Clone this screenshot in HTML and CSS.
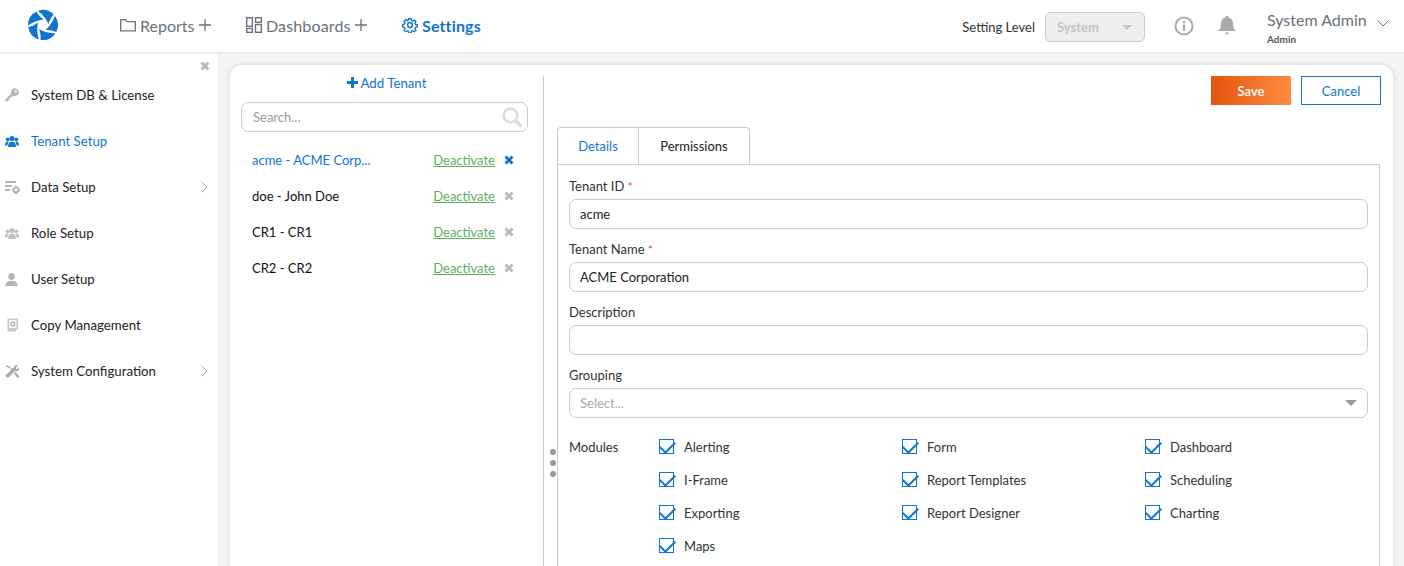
FILE: index.html
```html
<!DOCTYPE html>
<html lang="en">
<head>
    <meta charset="UTF-8">
    <title>Tenant Setup</title>
    <link rel="stylesheet" href="styles.css">
</head>
<body>

<header class="topbar">
    <svg class="logo" viewBox="0 0 32 32" width="32" height="32">
        <g fill="#0f75d1">
            <path id="blade" d="M10.900 1.900A15 15 0 0 1 26.800 5.600Q23.500 8.500 21.500 15Q18 7 10.900 1.900Z"/>
            <use href="#blade" transform="rotate(72 16 16)"/>
            <use href="#blade" transform="rotate(144 16 16)"/>
            <use href="#blade" transform="rotate(216 16 16)"/>
            <use href="#blade" transform="rotate(288 16 16)"/>
        </g>
    </svg>
    <nav class="mainnav">
        <a class="navitem navitem-reports">
            <svg viewBox="0 0 16 16" width="16" height="16" fill="none" stroke="#6b7178" stroke-width="1.300"><path d="M.7 13.800V2.700h5l1.500 2h8.100v9.100z"/></svg>
            <span>Reports</span>
            <svg class="plus" viewBox="0 0 12 12" width="12" height="12" stroke="#6b7178" stroke-width="1.300"><path d="M6 0v12M0 6h12"/></svg>
        </a>
        <a class="navitem navitem-dash">
            <svg viewBox="0 0 16 16" width="16" height="16" fill="none" stroke="#6b7178" stroke-width="1.400"><rect x=".7" y=".7" width="5.600" height="8.600"/><rect x="9.500" y=".7" width="5.800" height="4.600"/><rect x=".7" y="11.500" width="5.600" height="3.800"/><rect x="9.500" y="7.500" width="5.800" height="7.800"/></svg>
            <span>Dashboards</span>
            <svg class="plus" viewBox="0 0 12 12" width="12" height="12" stroke="#6b7178" stroke-width="1.300"><path d="M6 0v12M0 6h12"/></svg>
        </a>
        <a class="navitem active">
            <svg viewBox="0 0 16 16" width="16" height="16" fill="none" stroke="#0f75d1" stroke-width="1.500"><circle cx="8" cy="8" r="2.400"/><path d="M6.700 1h2.600l.4 2 1.300.6 1.800-1.100 1.800 1.800-1.100 1.800.6 1.300 2 .4v2.400l-2 .4-.6 1.300 1.100 1.800-1.800 1.800-1.800-1.100-1.300.6-.4 2H6.700l-.4-2-1.300-.6-1.800 1.100-1.800-1.800 1.100-1.800-.6-1.300-2-.4V7.400l2-.4.6-1.300-1.100-1.800 1.800-1.800 1.800 1.100 1.300-.6z" transform="translate(.8 .8) scale(.9)"/></svg>
            <span>Settings</span>
        </a>
    </nav>
    <div class="topright">
        <span class="level-label">Setting Level</span>
        <div class="level-select"><span>System</span><i class="caret"></i></div>
        <svg class="info" viewBox="0 0 20 20" width="20" height="20"><circle cx="10" cy="10" r="8.500" fill="none" stroke="#a9a9a9" stroke-width="2"/><rect x="8.800" y="8.500" width="2.400" height="6" fill="#a9a9a9"/><rect x="8.800" y="5" width="2.400" height="2.300" fill="#a9a9a9"/></svg>
        <svg class="bell" viewBox="0 0 18 20" width="18" height="20" fill="#a9a9a9"><path d="M9 0c1 0 1.500.7 1.500 1.500C13.500 2.200 15 4.500 15 7.500c0 4 1 5.500 3 7.500H0c2-2 3-3.500 3-7.500 0-3 1.500-5.300 4.500-6C7.500.7 8 0 9 0z"/><path d="M7 16.500h4c0 1-.9 2-2 2s-2-1-2-2z"/></svg>
        <div class="userbox">
            <div class="username">System Admin</div>
            <div class="userrole">Admin</div>
        </div>
        <svg class="userchev" viewBox="0 0 12 7" width="12" height="7" fill="none" stroke="#6b7178"><path d="M.5.5 6 6 11.500.5"/></svg>
    </div>
</header>

<div class="shell">
    <aside class="sidebar">
        <div class="side-close">
            <svg class="xmark" viewBox="0 0 10 10" width="10" height="10"><path d="M1.500 1.500l7 7M8.500 1.500l-7 7"/></svg>
        </div>
        <a class="sideitem">
            <svg class="sideicon" viewBox="0 0 14 14" width="14" height="14" fill="#b5b5b5"><path d="M10 .2a3.900 3.900 0 1 1-1.600 7.500L7 9.100H5.500v1.500H4v1.500L2.600 13.500H.5v-2.100l5.800-5.800A3.900 3.900 0 0 1 10 .2zm.8 1.800a1.200 1.200 0 1 0 0 2.400 1.200 1.200 0 0 0 0-2.400z"/></svg>
            <span>System DB &amp; License</span>
        </a>
        <a class="sideitem current">
            <svg class="sideicon" viewBox="0 0 14 11" width="14" height="11" fill="#0f75d1"><circle cx="7" cy="2.600" r="2.500"/><path d="M3 11c0-3.500 1.300-5.200 4-5.200s4 1.700 4 5.200z"/><circle cx="2.700" cy="3.300" r="1.900"/><circle cx="11.300" cy="3.300" r="1.900"/><path d="M0 9.500c0-2.500.8-4 2.500-4 .5 0 .9.100 1.200.4-.8 1-1.200 2.200-1.300 3.600zM14 9.500c0-2.500-.8-4-2.500-4-.5 0-.9.100-1.200.4.800 1 1.200 2.200 1.300 3.600z"/></svg>
            <span>Tenant Setup</span>
        </a>
        <a class="sideitem">
            <svg class="sideicon sideicon-wide" viewBox="0 0 15 13" width="15" height="13" fill="#b5b5b5"><rect width="11" height="2"/><rect y="4" width="7" height="2"/><rect y="8" width="5" height="2"/><circle cx="11" cy="8.800" r="2.500" fill="none" stroke="#b5b5b5" stroke-width="2"/><path d="M10 4.500h2v1.300h-2zM10 11.800h2V13h-2zM14 7.800h1v2h-1zM7 7.800h1v2H7z"/></svg>
            <span>Data Setup</span>
            <svg class="sidechev" viewBox="0 0 7 12" width="7" height="12" fill="none" stroke="#a9a9a9"><path d="M.5.500 6 6 .5 11.500"/></svg>
        </a>
        <a class="sideitem">
            <svg class="sideicon" viewBox="0 0 14 11" width="14" height="11" fill="#c0c0c0"><circle cx="7" cy="2.600" r="2.500"/><path d="M3 11c0-3.500 1.300-5.200 4-5.200s4 1.700 4 5.200z"/><circle cx="2.700" cy="3.300" r="1.900"/><circle cx="11.300" cy="3.300" r="1.900"/><path d="M0 9.500c0-2.500.8-4 2.500-4 .5 0 .9.100 1.200.4-.8 1-1.200 2.200-1.300 3.600zM14 9.500c0-2.500-.8-4-2.500-4-.5 0-.9.100-1.200.4.800 1 1.200 2.200 1.300 3.600z"/></svg>
            <span>Role Setup</span>
        </a>
        <a class="sideitem">
            <svg class="sideicon" viewBox="0 0 14 13" width="14" height="13" fill="#b5b5b5"><ellipse cx="6.500" cy="3.500" rx="3.200" ry="3.500"/><path d="M.2 13c0-3 1.500-4.300 4.300-5h4c2.800.7 4.300 2 4.300 5z"/></svg>
            <span>User Setup</span>
        </a>
        <a class="sideitem">
            <svg class="sideicon" viewBox="0 0 14 14" width="14" height="14"><path d="M2.500.5h10.500v11H11v2H2.500z" fill="#c8c8c8"/><rect x="4" y="2" width="7.500" height="8" fill="#f4f4f4"/><circle cx="7.700" cy="6" r="2" fill="none" stroke="#a9a9a9" stroke-width="1.200"/></svg>
            <span>Copy Management</span>
        </a>
        <a class="sideitem">
            <svg class="sideicon" viewBox="0 0 14 14" width="14" height="14" fill="#a9a9a9"><path d="M1 2.500 2.500 1l4 3.500 2-.5L10 1.500c1-.6 2.500-.4 3 0l-2 2 .2 1.400 1.300.2 1.300-2c.5 1 .3 2.500-.5 3.300-1 1-2.300 1-3.300.6L4 13c-.7.700-2 .7-2.700 0s-.7-1.800 0-2.500l5-4.800-1-1.200z"/><path d="m9 9 1.200-1 3.500 3.500c.4.500.4 1.300 0 1.800-.5.500-1.300.5-1.800 0z"/></svg>
            <span>System Configuration</span>
            <svg class="sidechev" viewBox="0 0 7 12" width="7" height="12" fill="none" stroke="#a9a9a9"><path d="M.5.500 6 6 .5 11.500"/></svg>
        </a>
    </aside>

    <main class="content">
        <div class="card">
            <section class="tenants">
                <a class="add-tenant"><svg viewBox="0 0 11 11" width="11" height="11" fill="#0f75d1"><path d="M4 0h3v4h4v3H7v4H4V7H0V4h4z"/></svg> Add Tenant</a>
                <div class="searchbox">
                    <span>Search...</span>
                    <svg viewBox="0 0 20 20" width="20" height="20" fill="none" stroke="#dcdcdc"><circle cx="8.500" cy="8.500" r="6.800" stroke-width="2.600"/><path d="m13.500 13.500 5 5" stroke-width="3.400" stroke-linecap="round"/></svg>
                </div>
                <ul class="tenant-list">
                    <li class="tenant selected"><span class="tenant-name">acme - ACME Corp...</span><a class="deact">Deactivate</a><svg class="xmark" viewBox="0 0 10 10" width="10" height="10"><path d="M1.500 1.500l7 7M8.500 1.500l-7 7"/></svg></li>
                    <li class="tenant"><span class="tenant-name">doe - John Doe</span><a class="deact">Deactivate</a><svg class="xmark" viewBox="0 0 10 10" width="10" height="10"><path d="M1.500 1.500l7 7M8.500 1.500l-7 7"/></svg></li>
                    <li class="tenant"><span class="tenant-name">CR1 - CR1</span><a class="deact">Deactivate</a><svg class="xmark" viewBox="0 0 10 10" width="10" height="10"><path d="M1.500 1.500l7 7M8.500 1.500l-7 7"/></svg></li>
                    <li class="tenant"><span class="tenant-name">CR2 - CR2</span><a class="deact">Deactivate</a><svg class="xmark" viewBox="0 0 10 10" width="10" height="10"><path d="M1.500 1.500l7 7M8.500 1.500l-7 7"/></svg></li>
                </ul>
            </section>

            <div class="splitter">
                <div class="dots"><i></i><i></i><i></i></div>
            </div>

            <section class="detail">
                <div class="actions">
                    <button class="btn-save">Save</button>
                    <button class="btn-cancel">Cancel</button>
                </div>
                <div class="tabs">
                    <a class="tab tab-on">Details</a>
                    <a class="tab">Permissions</a>
                </div>
                <div class="panel">
                    <label class="flabel">Tenant ID <em>*</em></label>
                    <div class="finput">acme</div>
                    <label class="flabel">Tenant Name <em>*</em></label>
                    <div class="finput">ACME Corporation</div>
                    <label class="flabel">Description</label>
                    <div class="finput"></div>
                    <label class="flabel">Grouping</label>
                    <div class="finput fselect"><span>Select...</span><i class="caret"></i></div>
                    <div class="modules">
                        <div class="modules-label">Modules</div>
                        <div class="modules-grid">
                            <label class="mod"><i class="cb"></i>Alerting</label>
                            <label class="mod"><i class="cb"></i>Form</label>
                            <label class="mod"><i class="cb"></i>Dashboard</label>
                            <label class="mod"><i class="cb"></i>I-Frame</label>
                            <label class="mod"><i class="cb"></i>Report Templates</label>
                            <label class="mod"><i class="cb"></i>Scheduling</label>
                            <label class="mod"><i class="cb"></i>Exporting</label>
                            <label class="mod"><i class="cb"></i>Report Designer</label>
                            <label class="mod"><i class="cb"></i>Charting</label>
                            <label class="mod"><i class="cb"></i>Maps</label>
                        </div>
                    </div>
                </div>
            </section>
        </div>
    </main>
</div>

</body>
</html>
```

FILE: styles.css
```css
* {
    box-sizing: border-box;
}

html, body {
    height: 566px;
    margin: 0;
    overflow: hidden;
}

body {
    font-family: 'Lato', 'Liberation Sans', sans-serif;
    font-size: 13px;
    color: #222;
    background-color: #fff;
}

/* top bar */
.topbar {
    display: flex;
    align-items: center;
    height: 54px;
    padding-left: 27px;
    border-bottom: 2px solid #ececec;
}

.logo {
    flex: none;
    margin-top: -2px;
}

.mainnav {
    display: flex;
    margin-left: 61px;
    margin-top: -2px;
    font-size: 16px;
    color: #6b7178;
}

.navitem {
    display: flex;
    align-items: center;
    gap: 4px;
}

.navitem-reports {
    width: 126px;
}

.navitem-dash {
    width: 156px;
    letter-spacing: 0.15px;
}

.plus {
    margin-left: 1px;
}

.navitem-dash .plus {
    margin-left: 0;
}

.active {
    color: #0f75d1;
    font-weight: 700;
    letter-spacing: 0.15px;
}

.topright {
    display: flex;
    align-items: center;
    margin-left: auto;
    padding-right: 15px;
}

.level-label {
    margin-top: 1px;
    color: #333;
}

.level-select {
    display: flex;
    align-items: center;
    justify-content: space-between;
    width: 100px;
    height: 30px;
    margin-left: 10px;
    margin-top: 2px;
    padding: 0 12px 0 11px;
    border: 1px solid #ccc;
    border-radius: 5px;
    background-color: #eee;
    color: #c4c4c4;
    font-weight: 700;
}

.caret {
    width: 0;
    height: 0;
    border-left: 5px solid transparent;
    border-right: 5px solid transparent;
    border-top: 5px solid #c4c4c4;
}

.info {
    margin-left: 29px;
}

.bell {
    margin-left: 24px;
}

.userbox {
    width: 110px;
    margin-left: 31px;
}

.username {
    margin-top: 2px;
    font-size: 16px;
    color: #6b7178;
}

.userrole {
    margin-top: 4px;
    font-size: 10px;
    font-weight: 700;
    color: #555;
}

.userchev {
    margin-top: -6px;
}

/* sidebar */
.shell {
    display: flex;
    height: 512px;
    background-color: #f3f3f3;
}

.sidebar {
    flex: none;
    width: 219px;
    padding-top: 7px;
    font-size: 13.250px;
    background-color: #fff;
    border-right: 1px solid #e8e8e8;
}

.side-close {
    display: flex;
    justify-content: flex-end;
    height: 11px;
    padding-right: 8px;
}

.xmark {
    flex: none;
    fill: none;
    stroke: #bbb;
    stroke-width: 3;
}

.sideitem {
    display: flex;
    align-items: center;
    height: 46px;
    padding-right: 10px;
    color: #222;
}

.sideitem span {
    flex: 1;
}

.sideicon {
    flex: none;
    margin-left: 5px;
    margin-right: 12px;
}

.sideicon-wide {
    margin-right: 11px;
}

.current {
    color: #0f75d1;
}

.sidechev {
    flex: none;
}

/* main card */
.content {
    flex: 1;
    min-width: 0;
    padding: 11px 11px 0 11px;
    overflow: hidden;
}

.card {
    display: flex;
    height: 600px;
    background-color: #fff;
    border-radius: 12px;
    box-shadow: 0 0 5px rgba(0, 0, 0, 0.12);
}

.tenants {
    flex: none;
    width: 313px;
    padding: 10px 15px 0 11px;
}

.add-tenant {
    display: block;
    height: 27px;
    padding-left: 4px;
    text-align: center;
    font-size: 13.250px;
    color: #0f75d1;
}

.searchbox {
    display: flex;
    align-items: center;
    justify-content: space-between;
    height: 30px;
    padding: 0 5px 0 11px;
    border: 1px solid #ccc;
    border-radius: 7px;
    color: #999;
}

.tenant-list {
    margin: 10px 0 0;
    padding: 0;
    list-style: none;
}

.tenant {
    display: flex;
    align-items: center;
    height: 36px;
    padding-left: 11px;
    color: #111;
}

.tenant-name {
    flex: 1;
}

.selected {
    color: #0f75d1;
}

.deact {
    color: #5cb05c;
    text-decoration: underline;
}

.tenant .xmark {
    margin: 0 14px 0 9px;
}

.selected .xmark {
    stroke: #0f75d1;
}

.splitter {
    flex: none;
    position: relative;
    width: 1px;
    margin-top: 11px;
    background-color: #ccc;
}

.dots {
    position: absolute;
    left: 7px;
    top: 373px;
}

.dots i {
    display: block;
    width: 6px;
    height: 6px;
    margin-bottom: 5px;
    border-radius: 50%;
    background-color: #999;
}

.detail {
    flex: 1;
    min-width: 0;
    padding: 11px 13px 0 13px;
}

.actions {
    display: flex;
    justify-content: flex-end;
    gap: 10px;
    height: 51px;
    margin-right: -1px;
}

.actions button {
    width: 80px;
    height: 29px;
    font-family: inherit;
    font-size: 13px;
}

.btn-save {
    border: 0;
    color: #fff;
    font-weight: 600;
    background: linear-gradient(to right, #e5540e, #fc8d40);
}

.btn-cancel {
    border: 1px solid #0f75d1;
    color: #0f75d1;
    background-color: #fff;
}

.tabs {
    display: flex;
    height: 37px;
}

.tab {
    display: flex;
    align-items: center;
    justify-content: center;
    width: 82px;
    border: 1px solid #ccc;
    border-bottom: 0;
    border-radius: 4px 0 0 0;
}

.tab + .tab {
    width: 111px;
    border-left: 0;
    border-radius: 0 4px 0 0;
}

.tab-on {
    color: #0f75d1;
}

.panel {
    height: 500px;
    padding: 12px 11px 0 11px;
    border: 1px solid #ccc;
}

.flabel {
    display: block;
    height: 22px;
    line-height: 18px;
    color: #333;
}

.flabel em {
    color: #e33;
    font-style: normal;
    font-size: 11px;
}

.finput {
    display: flex;
    align-items: center;
    height: 30px;
    margin-bottom: 11px;
    padding: 0 10px;
    border: 1px solid #ccc;
    border-radius: 7px;
    color: #222;
}

.fselect {
    justify-content: space-between;
    color: #aaa;
}

.fselect .caret {
    border-left-width: 6px;
    border-right-width: 6px;
    border-top: 6px solid #999;
}

.modules {
    display: flex;
    margin-top: 20px;
}

.modules-label {
    flex: none;
    width: 90px;
    line-height: 19px;
    color: #333;
}

.modules-grid {
    flex: 1;
    min-width: 0;
    display: grid;
    grid-template-columns: 243px 243px 1fr;
    grid-auto-rows: 33px;
}

.mod {
    display: flex;
    align-items: flex-start;
    gap: 10px;
    line-height: 19px;
    color: #333;
}

.cb {
    flex: none;
    position: relative;
    width: 15px;
    height: 15px;
    margin-top: 1px;
    border: 1px solid #0f75d1;
}

.cb::after {
    content: "";
    position: absolute;
    left: 3px;
    top: -2px;
    width: 7px;
    height: 13px;
    border-right: 2px solid #0f75d1;
    border-bottom: 2px solid #0f75d1;
    transform: rotate(45deg);
}
```
